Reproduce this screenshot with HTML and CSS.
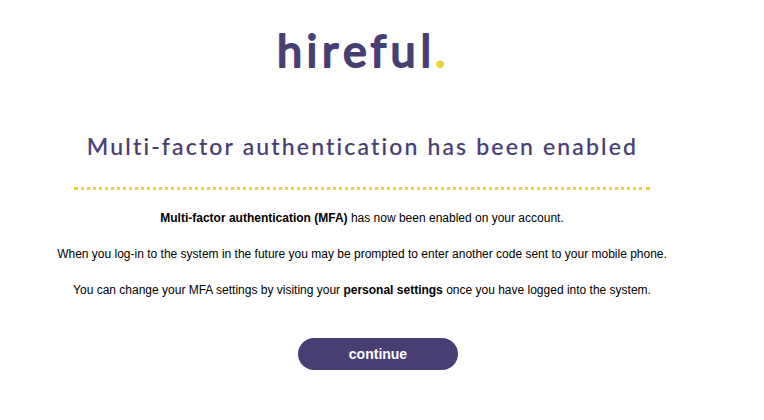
FILE: index.html
```html
<!DOCTYPE html>
<html lang="en">
<head>
	<meta charset="UTF-8">
	<title>hireful</title>
	<link rel="stylesheet" href="styles.css">
</head>
<body>
	<div class="container">
		<svg class="logo" width="180" height="56" viewBox="0 0 180 56">
			<text y="43" x="5 34.5 50 71 98.5 118.5 148.5">hireful</text>
			<text class="dot" y="43" x="163">.</text>
		</svg>
		<h1>Multi-factor authentication has been enabled</h1>
		<div class="divider"></div>
		<div class="message">
			<p><b>Multi-factor authentication (MFA)</b> has now been enabled on your account.</p>
			<p>When you log-in to the system in the future you may be prompted to enter another code sent to your mobile phone.</p>
			<p>You can change your MFA settings by visiting your <b>personal settings</b> once you have logged into the system.</p>
		</div>
	</div>
	<a class="button" href="#">continue</a>
</body>
</html>
```

FILE: styles.css
```css
body {
	margin: 0;
	background: #fff;
	font-family: "Liberation Sans", Arial, sans-serif;
	font-size: 12px;
	color: #000;
}
.container {
	width: 724px;
	padding-top: 24px;
	text-align: center;
}
.logo {
	display: block;
	margin: 0 auto;
	font-family: Lato, sans-serif;
	font-size: 45px;
	font-weight: 400;
	fill: #473e74;
	stroke: #473e74;
	stroke-width: 2px;
	stroke-linejoin: round;
}
.dot {
	fill: #ecd035;
	stroke: #ecd035;
}
h1 {
	margin: 51px 0 0;
	padding-left: 1px;
	height: 30px;
	line-height: 30px;
	font-family: Lato, sans-serif;
	font-size: 23px;
	font-weight: 500;
	letter-spacing: 2.16px;
	white-space: nowrap;
	color: #473e74;
	-webkit-text-stroke: 0.15px #473e74;
}
.divider {
	width: 576px;
	margin: 26px auto 0;
	border-top: 3px dotted #ecd035;
}
.message {
	padding-top: 19px;
}
.message p {
	margin: 0 0 18px;
	line-height: 18px;
	white-space: nowrap;
}
.button {
	display: block;
	width: 160px;
	margin: 39px 0 0 298px;
	border-radius: 16px;
	background: #473e74;
	line-height: 32px;
	text-align: center;
	text-decoration: none;
	font-size: 14px;
	font-weight: bold;
	color: #fff;
}
```
